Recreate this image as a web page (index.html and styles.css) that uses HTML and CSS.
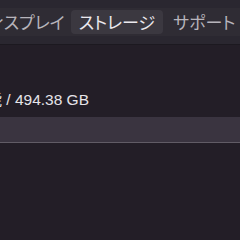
FILE: index.html
```html
<!DOCTYPE html>
<html lang="ja">
<head>
<meta charset="utf-8">
<link rel="stylesheet" href="styles.css">
</head>
<body>
<div class="toolbar">
  <div class="tabbar">
    <div class="tabs">
      <div class="tab first">ディスプレイ</div>
      <div class="tab selected">ストレージ</div>
      <div class="tab">サポート</div>
    </div>
  </div>
</div>
<div class="content">
  <div class="info"><span class="info-text">120.5 GB 使用可能 / 494.38 GB</span></div>
  <div class="bar"></div>
</div>
</body>
</html>
```
FILE: styles.css
```css
html, body {
  margin: 0;
  padding: 0;
  width: 240px;
  height: 240px;
  overflow: hidden;
  background: #231e27;
  font-family: "Liberation Sans", "Noto Sans CJK JP", sans-serif;
}
.toolbar {
  background: #2a2730;
  padding-top: 8px;
  height: 36px;
  border-bottom: 1px solid #1c1920;
}
.tabbar {
  background: #2f2c34;
  height: 28px;
  display: flex;
  align-items: center;
  overflow: hidden;
}
.tabs {
  display: flex;
  gap: 2px;
  margin-left: -32px;
}
.tab {
  flex: none;
  height: 24px;
  line-height: 24px;
  padding: 0 8px;
  font-family: "Noto Sans CJK JP", sans-serif;
  font-feature-settings: "palt";
  font-size: 17px;
  color: #b7b4bb;
  border-radius: 4px;
  white-space: nowrap;
}
.tab.first {
  padding-right: 4px;
}
.tab.selected {
  background: #3b3840;
  color: #ebe9ee;
}
.content {
  display: flex;
  flex-direction: column;
}
.info {
  width: 89px;
  display: flex;
  justify-content: flex-end;
  margin-top: 42px;
  height: 30px;
  line-height: 26px;
}
.info-text {
  flex: none;
  white-space: nowrap;
  font-size: 15.5px;
  color: #e6e4e9;
}
.bar {
  height: 25px;
  background: #3a3440;
  border-bottom: 1px solid #615c66;
}
```
